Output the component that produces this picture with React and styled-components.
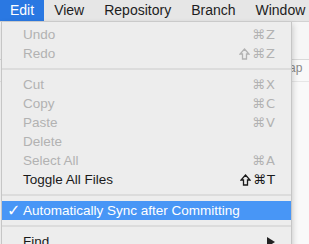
import styled, { createGlobalStyle } from "styled-components";

const Global = createGlobalStyle`
  html, body {
    margin: 0;
    padding: 0;
    width: 309px;
    height: 244px;
    overflow: hidden;
    background: #f7f7f7;
  }
  body {
    font-family: "Liberation Sans", "DejaVu Sans", Arial, sans-serif;
    -webkit-font-smoothing: antialiased;
  }
`;

const Screen = styled.div`
  position: relative;
  width: 309px;
  height: 244px;
  overflow: hidden;
`;

const MenuBar = styled.div`
  display: flex;
  height: 22px;
  background: #e6e6e6;
  border-bottom: 1px solid #d2d2d2;
  box-sizing: border-box;
`;

const BarItem = styled.div`
  padding: 0 10px;
  font-size: 14px;
  line-height: 21px;
  color: ${(p) => (p.$active ? "#fff" : "#1d1d1d")};
  background: ${(p) => (p.$active ? "#2a78e2" : "transparent")};
  white-space: nowrap;
`;

const Behind = styled.div`
  display: flex;
  flex-direction: column;
  height: 222px;
  background: #f9f9f9;
`;

const Toolbar = styled.div`
  height: 37px;
  border-bottom: 1px solid #d9d9d9;
  background: #f6f6f6;
`;

const TabRow = styled.div`
  display: flex;
  justify-content: flex-end;
  padding-top: 1px;
  font-size: 12px;
  color: #8a8a8a;
  height: 20px;
  border-bottom: 1px solid #e6e6e6;
`;

const TabText = styled.span`
  width: 30px;
  white-space: nowrap;
`;

const Menu = styled.div`
  position: absolute;
  left: 1px;
  top: 22px;
  width: 291px;
  padding-top: 3px;
  background: #ededed;
  border: 1px solid #c6c6c6;
  border-top: none;
  box-shadow: 1px 2px 6px rgba(0, 0, 0, 0.18);
  box-sizing: border-box;
`;

const Row = styled.div`
  display: flex;
  align-items: center;
  height: 19px;
  padding: 0 15px 0 21px;
  position: relative;
  font-size: 13.5px;
  color: ${(p) => (p.$active ? "#fff" : p.$disabled ? "#b2b2b2" : "#1a1a1a")};
  background: ${(p) => (p.$active ? "#4896f6" : "transparent")};
`;

const Check = styled.span`
  position: absolute;
  left: 5px;
  top: 0;
  line-height: 19px;
  font-size: 16px;
  font-weight: bold;
  font-family: "DejaVu Sans", sans-serif;
`;

const Label = styled.span`
  flex: 1;
  white-space: nowrap;
`;

const Shortcut = styled.span`
  display: flex;
  align-items: center;
  gap: 2px;
  font-family: "DejaVu Sans", "Liberation Sans", sans-serif;
  font-size: 13px;
  letter-spacing: 1px;
`;

const Arrow = styled.span`
  width: 0;
  height: 0;
  border-top: 5px solid transparent;
  border-bottom: 5px solid transparent;
  border-left: 8px solid #222;
  margin-right: 1px;
`;

const Separator = styled.div`
  height: 12px;
  display: flex;
  align-items: center;
  &::after {
    content: "";
    flex: 1;
    height: 2px;
    background: #dcdcdc;
  }
`;

const ShiftIcon = () => (
  <svg width="11" height="12" viewBox="0 0 11 12">
    <path
      d="M5.5 1 L10 6 H7.5 V11 H3.5 V6 H1 Z"
      fill="none"
      stroke="currentColor"
      strokeWidth="1.3"
      strokeLinejoin="miter"
    />
  </svg>
);

const items = [
  { label: "Undo", key: "⌘Z", disabled: true },
  { label: "Redo", key: "⌘Z", shift: true, disabled: true },
  { sep: true },
  { label: "Cut", key: "⌘X", disabled: true },
  { label: "Copy", key: "⌘C", disabled: true },
  { label: "Paste", key: "⌘V", disabled: true },
  { label: "Delete", disabled: true },
  { label: "Select All", key: "⌘A", disabled: true },
  { label: "Toggle All Files", key: "⌘T", shift: true },
  { sep: true },
  { label: "Automatically Sync after Committing", active: true, checked: true },
  { sep: true },
  { label: "Find", submenu: true },
];

const App = () => {
  return (
    <Screen>
      <Global />
      <MenuBar>
        <BarItem $active>Edit</BarItem>
        <BarItem>View</BarItem>
        <BarItem>Repository</BarItem>
        <BarItem>Branch</BarItem>
        <BarItem>Window</BarItem>
      </MenuBar>
      <Behind>
        <Toolbar />
        <TabRow>
          <TabText>Map</TabText>
        </TabRow>
      </Behind>
      <Menu>
        {items.map((item, i) =>
          item.sep ? (
            <Separator key={i} />
          ) : (
            <Row key={i} $disabled={item.disabled} $active={item.active}>
              {item.checked && <Check>✓</Check>}
              <Label>{item.label}</Label>
              {item.key && (
                <Shortcut>
                  {item.shift && <ShiftIcon />}
                  {item.key}
                </Shortcut>
              )}
              {item.submenu && <Arrow />}
            </Row>
          )
        )}
      </Menu>
    </Screen>
  );
};

export default App;
